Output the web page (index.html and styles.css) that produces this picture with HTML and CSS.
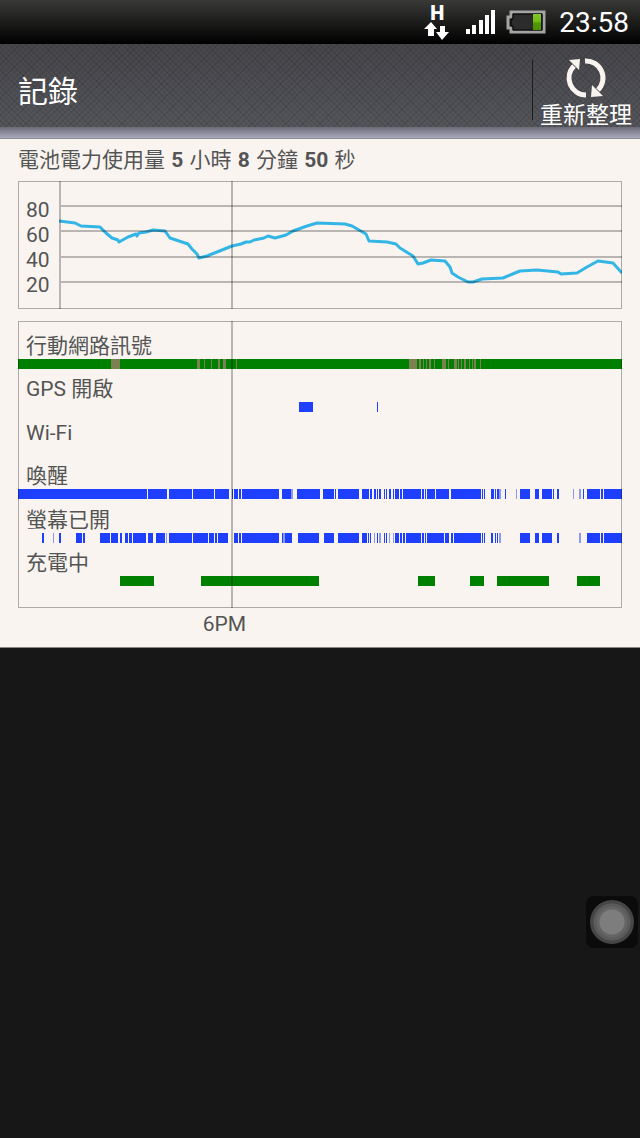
FILE: index.html
```
<!DOCTYPE html>
<html lang="zh-Hant">
<head>
  <meta charset="UTF-8">
  <meta name="viewport" content="width=device-width, initial-scale=1">
  <title>記錄</title>
  <link rel="stylesheet" href="styles.css">
</head>
<body>
  <div class="status-bar">
    <div class="status-data">
      <span>H</span>
      <svg width="26" height="18" viewBox="0 0 26 18" aria-hidden="true">
        <path d="M7 0l6 7h-3v7H4V7H0z"/>
        <path d="M16 4h5v6h4l-7 8-6-8h4z"/>
      </svg>
    </div>
    <svg class="status-signal" width="30" height="26" viewBox="0 0 30 26" aria-hidden="true">
      <path d="M0 20h4v5H0zM6 16h4v9H6zM13 11h4v14h-4zM19 6h4v19h-4zM25 1h4v24h-4z"/>
    </svg>
    <svg class="status-battery" width="40" height="26" viewBox="0 0 40 26" aria-hidden="true">
      <defs>
        <linearGradient id="charge" x1="0" y1="0" x2="0" y2="1">
          <stop offset="0" stop-color="#86c62c"/>
          <stop offset=".5" stop-color="#6dbb12"/>
          <stop offset=".55" stop-color="#529a00"/>
          <stop offset="1" stop-color="#4b9000"/>
        </linearGradient>
      </defs>
      <path class="battery-case" d="M5 3h33v20H5v-4H2V8h3z"/>
      <path class="battery-fill" d="M7 5h29v16H7v-4H5v-7h2z"/>
      <rect x="27" y="5" width="8" height="16" fill="url(#charge)"/>
    </svg>
    <span class="clock">23:58</span>
  </div>

  <header class="header">
    <h1>記錄</h1>
    <button class="refresh" type="button">
      <svg width="42" height="42" viewBox="0 0 42 42" aria-hidden="true">
        <path class="arc" d="M21 38A17 17 0 0 1 9 9"/>
        <path class="arc" d="M20 4A17 17 0 0 1 33 33"/>
        <path d="M4 3l11-1-1 11z"/>
        <path d="M27 28l11 11-12 1z"/>
      </svg>
      <span>重新整理</span>
    </button>
  </header>

  <main class="content">
    <p class="summary">電池電力使用量 <b>5</b> 小時 <b>8</b> 分鐘 <b>50</b> 秒</p>

    <!-- 電量曲線 -->
    <section class="chart level-chart" aria-label="電池電力">
      <div class="scale">
        <span>80</span>
        <span>60</span>
        <span>40</span>
        <span>20</span>
      </div>
      <svg class="plot" viewBox="0 0 563 128" preserveAspectRatio="none" aria-hidden="true">
        <path class="level" d="M0 40L16 42L22 45L41 46L47 52L53 57L59 59L60 61L69 56L77 53L78 55L80 52L87 51L94 49L106 50L111 57L129 63L133 68L138 73L140 77L148 75L158 71L173 65L182 63L187 61L191 61L195 59L205 57L209 55L216 57L227 54L234 50L248 45L258 42L286 43L293 45L307 53L310 60L328 61L337 63L341 67L354 75L359 83L364 82L372 79L386 80L391 86L393 92L399 96L409 101L414 101L423 98L444 97L456 92L461 90L478 89L499 91L502 93L518 92L528 86L539 80L554 82L563 92"/>
        <path class="grid" d="M0 25H563M0 50H563M0 76H563M0 101H563M1 0V128"/>
      </svg>
    </section>

    <!-- 各項目的使用時段 -->
    <section class="chart usage-chart" aria-label="使用時段">
      <div class="row">
        <span>行動網路訊號</span>
        <svg class="bar" viewBox="0 0 604 10" preserveAspectRatio="none" aria-hidden="true">
          <path class="green" d="M0 5H604"/>
          <path class="weak" d="M93 5H102M179 5H182M186 5H187M193 5H194M200 5H202M205 5H208M218 5H219M391 5H399M401 5H403M405 5H406M408 5H409M411 5H413M416 5H417M424 5H428M430 5H431M436 5H439M440 5H441M443 5H444M446 5H448M451 5H452M454 5H455M456 5H458M462 5H463"/>
        </svg>
      </div>
      <div class="row">
        <span>GPS 開啟</span>
        <svg class="bar" viewBox="0 0 604 10" preserveAspectRatio="none" aria-hidden="true">
          <path class="blue" d="M281 5H295M359 5H360"/>
        </svg>
      </div>
      <div class="row">
        <span>Wi-Fi</span>
        <svg class="bar" viewBox="0 0 604 10" preserveAspectRatio="none" aria-hidden="true"></svg>
      </div>
      <div class="row">
        <span>喚醒</span>
        <svg class="bar" viewBox="0 0 604 10" preserveAspectRatio="none" aria-hidden="true">
          <path class="blue" d="M0 5H129M130 5H149M151 5H174M175 5H196M197 5H211M214 5H215M216 5H220M221 5H223M224 5H261M264 5H273M279 5H302M305 5H316M317 5H318M320 5H341M344 5H351M352 5H354M356 5H358M359 5H360M361 5H363M366 5H367M368 5H369M371 5H373M375 5H376M377 5H381M382 5H384M385 5H403M404 5H406M407 5H408M409 5H417M418 5H431M433 5H463M464 5H465M466 5H467M473 5H476M477 5H478M479 5H481M487 5H488M502 5H512M517 5H521M524 5H534M535 5H536M539 5H541M565 5H566M569 5H582M583 5H585M586 5H604"/>
          <path class="blue light" d="M273 5H275M481 5H483M498 5H499M555 5H556M561 5H563"/>
        </svg>
      </div>
      <div class="row">
        <span>螢幕已開</span>
        <svg class="bar" viewBox="0 0 604 10" preserveAspectRatio="none" aria-hidden="true">
          <path class="blue" d="M24 5H26M41 5H43M58 5H64M65 5H67M82 5H92M93 5H100M102 5H104M107 5H110M111 5H114M115 5H128M130 5H135M138 5H147M151 5H174M175 5H190M191 5H196M197 5H199M200 5H210M216 5H220M221 5H223M224 5H261M264 5H265M267 5H274M280 5H301M306 5H316M320 5H341M344 5H349M350 5H351M352 5H353M359 5H360M366 5H367M368 5H369M377 5H381M382 5H384M385 5H387M388 5H403M404 5H406M407 5H408M409 5H426M427 5H431M433 5H435M436 5H463M464 5H465M466 5H467M473 5H475M477 5H478M479 5H480M502 5H512M517 5H521M524 5H534M539 5H541M569 5H582M583 5H585M586 5H604"/>
          <path class="blue light" d="M35 5H36M148 5H149M265 5H267M356 5H357M361 5H363M371 5H372M375 5H376M481 5H483M561 5H563"/>
        </svg>
      </div>
      <div class="row">
        <span>充電中</span>
        <svg class="bar" viewBox="0 0 604 10" preserveAspectRatio="none" aria-hidden="true">
          <path class="green" d="M102 5H136M183 5H301M400 5H417M452 5H466M479 5H531M559 5H582"/>
        </svg>
      </div>
    </section>

    <p class="time">6PM</p>
  </main>

  <button class="assist" type="button" aria-label="輔助按鈕"><span></span></button>
</body>
</html>
```
FILE: styles.css
```
* {
  box-sizing: border-box;
}
body {
  margin: 0;
  min-height: 100vh;
  background: #171717;
  color: #545454;
  font-family: Roboto, "Noto Sans CJK TC", sans-serif;
  font-size: 21px;
  line-height: 26px;
}
h1, p {
  margin: 0;
  font-weight: normal;
}
svg {
  display: block;
}

/* status bar */
.status-bar {
  display: flex;
  justify-content: flex-end;
  align-items: center;
  height: 44px;
  padding-right: 11px;
  background: linear-gradient(#393937, #000);
  color: #fff;
}
.status-data {
  display: flex;
  flex-direction: column;
  align-items: center;
  margin-right: 16px;
  font-size: 20px;
  font-weight: 900;
  line-height: 18px;
}
.status-data svg,
.status-signal {
  fill: #fff;
}
.status-signal {
  margin-right: 10px;
}
.status-battery {
  margin-right: 13px;
}
.battery-case {
  fill: #222;
  stroke: #a4a4a4;
  stroke-width: 3;
}
.battery-fill {
  fill: #2c2c2c;
  stroke: #000;
}
.clock {
  padding-top: 2px;
  font-size: 28px;
}

/* title bar */
.header {
  display: flex;
  justify-content: space-between;
  align-items: center;
  height: 95px;
  padding-left: 18px;
  border-bottom: 1px solid #8f8e9c;
  background:
    linear-gradient(transparent 83px, #6b6a77 83px, #aaa8bb) no-repeat,
    repeating-linear-gradient(45deg, rgba(0,0,0,0.1) 0 1px, transparent 1px 4px),
    repeating-linear-gradient(-45deg, rgba(0,0,0,0.1) 0 1px, transparent 1px 4px),
    linear-gradient(#46464b, #57585d);
  color: #fff;
}
.header h1 {
  padding-top: 2px;
  font-size: 30px;
  line-height: 40px;
}
.refresh {
  display: flex;
  flex-direction: column;
  align-items: center;
  gap: 2px;
  padding: 6px 8px 0;
  border: 0;
  background: linear-gradient(#1d1d20, #1d1d20) no-repeat 0 9px / 1px 60px;
  color: #fff;
  font: inherit;
  font-size: 23px;
  line-height: 30px;
}
.refresh svg {
  fill: #f9f4f0;
}
.refresh .arc {
  fill: none;
  stroke: #f9f4f0;
  stroke-width: 5;
}

/* content */
.content {
  padding: 8px 18px 10px;
  border-bottom: 1px solid #8b8987;
  background: #f9f4f0;
}
.summary {
  margin-bottom: 8px;
}
.summary b {
  margin: 0 1px;
}
.chart {
  outline: 1px solid rgba(0,0,0,0.3);
  outline-offset: -1px;
  position: relative;
}
/* 6PM line */
.chart::after {
  content: "";
  position: absolute;
  top: 0;
  bottom: 0;
  left: 35.3%;
  width: 2px;
  background: rgba(0,0,0,0.26);
}
.level-chart {
  display: flex;
  height: 128px;
  margin-bottom: 12px;
}
.scale {
  display: grid;
  grid-template-rows: repeat(4, 25px);
  align-content: center;
  width: 41px;
  padding: 3px 0 0 8px;
}
.plot {
  flex: 1;
  min-width: 0;
  height: 100%;
}
.level {
  fill: none;
  stroke: #33b5e5;
  stroke-width: 3;
  stroke-linejoin: round;
}
.grid {
  fill: none;
  stroke: rgba(0,0,0,0.26);
  stroke-width: 2;
}
.usage-chart {
  display: grid;
  grid-template-rows: repeat(6, 1fr);
  height: 287px;
  padding: 4px 0 22px;
}
.row {
  display: flex;
  flex-direction: column;
  justify-content: flex-end;
}
.row span {
  padding-left: 8px;
}
.bar {
  width: 100%;
  height: 10px;
}
.bar path {
  stroke-width: 10;
  shape-rendering: crispEdges;
}
.green {
  stroke: #008000;
}
.blue {
  stroke: #1f3fff;
}
.weak {
  stroke: #7d8050;
}
.bar .light {
  opacity: 0.5;
}
.time {
  padding: 3px 0 0 30.6%;
}

/* floating button */
.assist {
  position: fixed;
  top: 896px;
  right: 2px;
  display: grid;
  place-items: center;
  width: 52px;
  height: 52px;
  padding: 0;
  border: 0;
  border-radius: 8px;
  background: #0b0b0b;
}
.assist span {
  width: 44px;
  height: 44px;
  border-radius: 50%;
  background: radial-gradient(circle, #7d7d7d 0 12px, #656565 13px 15px, #5b5b5b 16px 18px, #464646 19px 22px);
}
```
